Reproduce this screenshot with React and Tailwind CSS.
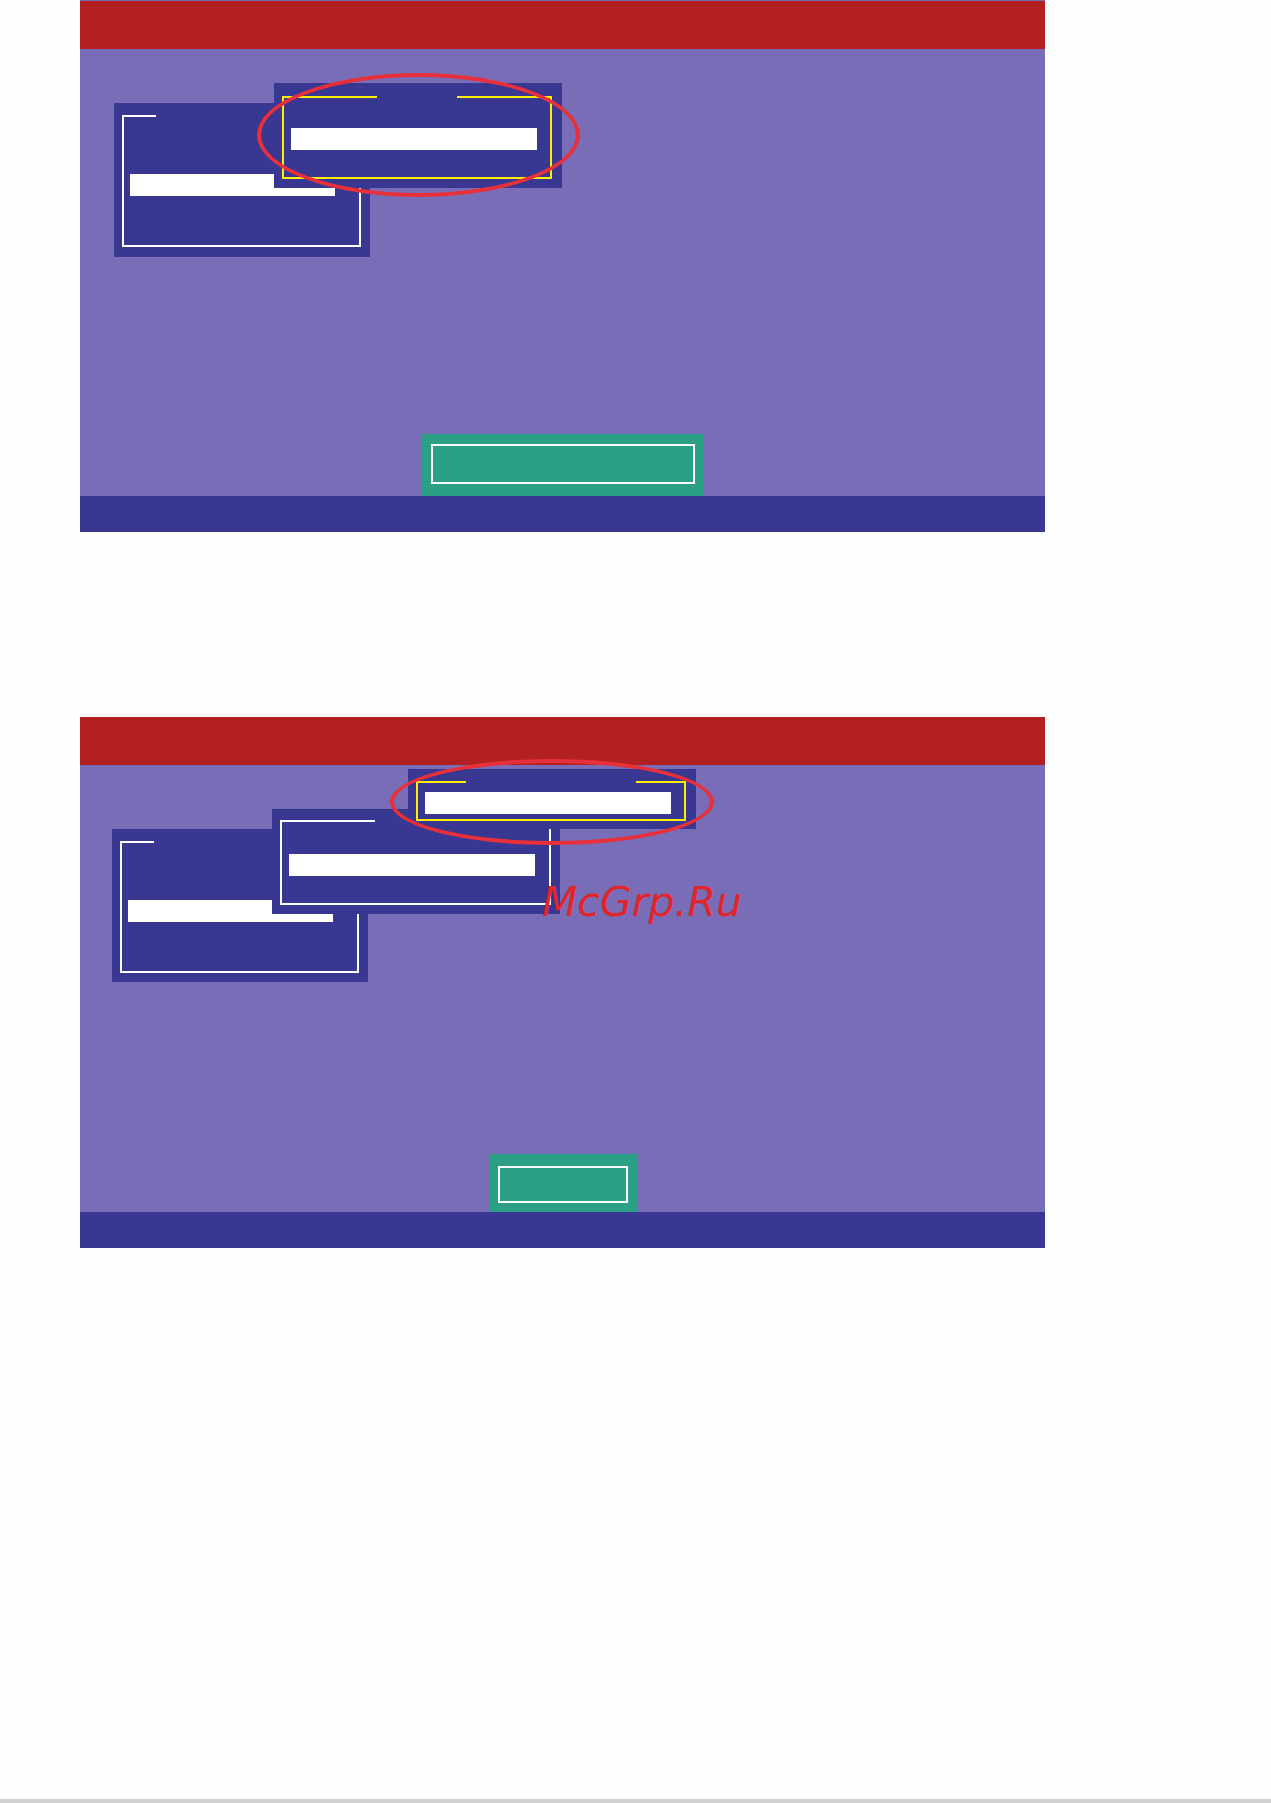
import React from "react";

const RED = "bg-[#b22022]";

function WhiteBox({ className, segment, children }) {
  // dialog frame: the top line is drawn only on the left, the rest holds the (blank) title
  return (
    <div className={`absolute bg-[#383893] ${className}`}>
      <div className="flex h-full flex-col border-x-2 border-b-2 border-white">
        <div className="-mx-[2px] flex">
          <div className={`h-[2px] bg-white ${segment}`} />
        </div>
        {children}
      </div>
    </div>
  );
}

function YellowBox({ className, segment, children }) {
  return (
    <div className={`absolute bg-[#383893] ${className}`}>
      <div className="flex h-full flex-col border-x-2 border-b-2 border-[#ffee00]">
        <div className="-mx-[2px] flex justify-between">
          <div className={`h-[2px] bg-[#ffee00] ${segment}`} />
          <div className={`h-[2px] bg-[#ffee00] ${segment}`} />
        </div>
        {children}
      </div>
    </div>
  );
}

function Bar({ className }) {
  return <div className={`h-[22px] bg-white ${className}`} />;
}

function Screen({ children, button, top = false }) {
  return (
    <div className={`ml-[80px] w-[965px] ${top ? "bg-[#7a6db7] pt-[1px]" : ""}`}>
      <div className={`h-[48px] ${RED}`} />
      <div className="relative flex h-[447px] flex-col justify-end bg-[#7a6db7]">
        {children}
        <div className="flex justify-center">{button}</div>
      </div>
      <div className="h-[36px] bg-[#383893]" />
    </div>
  );
}

export default function App() {
  return (
    <div className="flex h-[1803px] flex-col bg-[#fefefe]" style={{ fontFamily: '"DejaVu Sans", sans-serif' }}>
      <Screen
        top
        button={
          <div className="h-[62px] w-[282px] bg-[#2ba086] pb-[12px] pl-[9px] pr-[9px] pt-[10px]">
            <div className="h-full border-2 border-white" />
          </div>
        }
      >
        <WhiteBox
          className="left-[34px] top-[54px] h-[154px] w-[256px] pb-[10px] pl-[8px] pr-[9px] pt-[12px]"
          segment="w-[34px]"
        >
          <Bar className="ml-[6px] mt-[57px] w-[205px]" />
        </WhiteBox>
        <YellowBox
          className="left-[194px] top-[34px] h-[105px] w-[288px] pb-[9px] pl-[8px] pr-[10px] pt-[13px]"
          segment="w-[95px]"
        >
          <Bar className="ml-[7px] mt-[30px] w-[246px]" />
        </YellowBox>
        <div className="absolute left-[177px] top-[24px] z-10 h-[124px] w-[323px] rounded-[50%] border-[4px] border-[#e8303a]" />
      </Screen>

      <div className="mt-[185px]">
        <Screen
          button={
            <div className="h-[58px] w-[148px] bg-[#2ba086] pb-[9px] pl-[9px] pr-[9px] pt-[12px]">
              <div className="h-full border-2 border-white" />
            </div>
          }
        >
          <WhiteBox
            className="left-[32px] top-[64px] h-[153px] w-[256px] pb-[9px] pl-[8px] pr-[9px] pt-[12px]"
            segment="w-[34px]"
          >
            <Bar className="ml-[6px] mt-[57px] w-[205px]" />
          </WhiteBox>
          <WhiteBox
            className="left-[192px] top-[44px] h-[105px] w-[288px] pb-[9px] pl-[8px] pr-[9px] pt-[11px]"
            segment="w-[95px]"
          >
            <Bar className="ml-[7px] mt-[32px] w-[246px]" />
          </WhiteBox>
          <YellowBox
            className="left-[328px] top-[4px] h-[60px] w-[288px] pb-[8px] pl-[8px] pr-[10px] pt-[12px]"
            segment="w-[50px]"
          >
            <Bar className="ml-[7px] mt-[9px] w-[246px]" />
          </YellowBox>
          <div className="absolute left-[310px] -top-[6px] z-10 h-[86px] w-[324px] rounded-[50%] border-[4px] border-[#e8303a]" />
          <div className="absolute left-[462px] top-[117px] z-10 text-[41px] italic leading-[41px] text-[#e0262b]">
            McGrp.Ru
          </div>
        </Screen>
      </div>

      <div className="flex-1" />
      <div className="h-[4px] bg-[#d0d0d0]" />
    </div>
  );
}
